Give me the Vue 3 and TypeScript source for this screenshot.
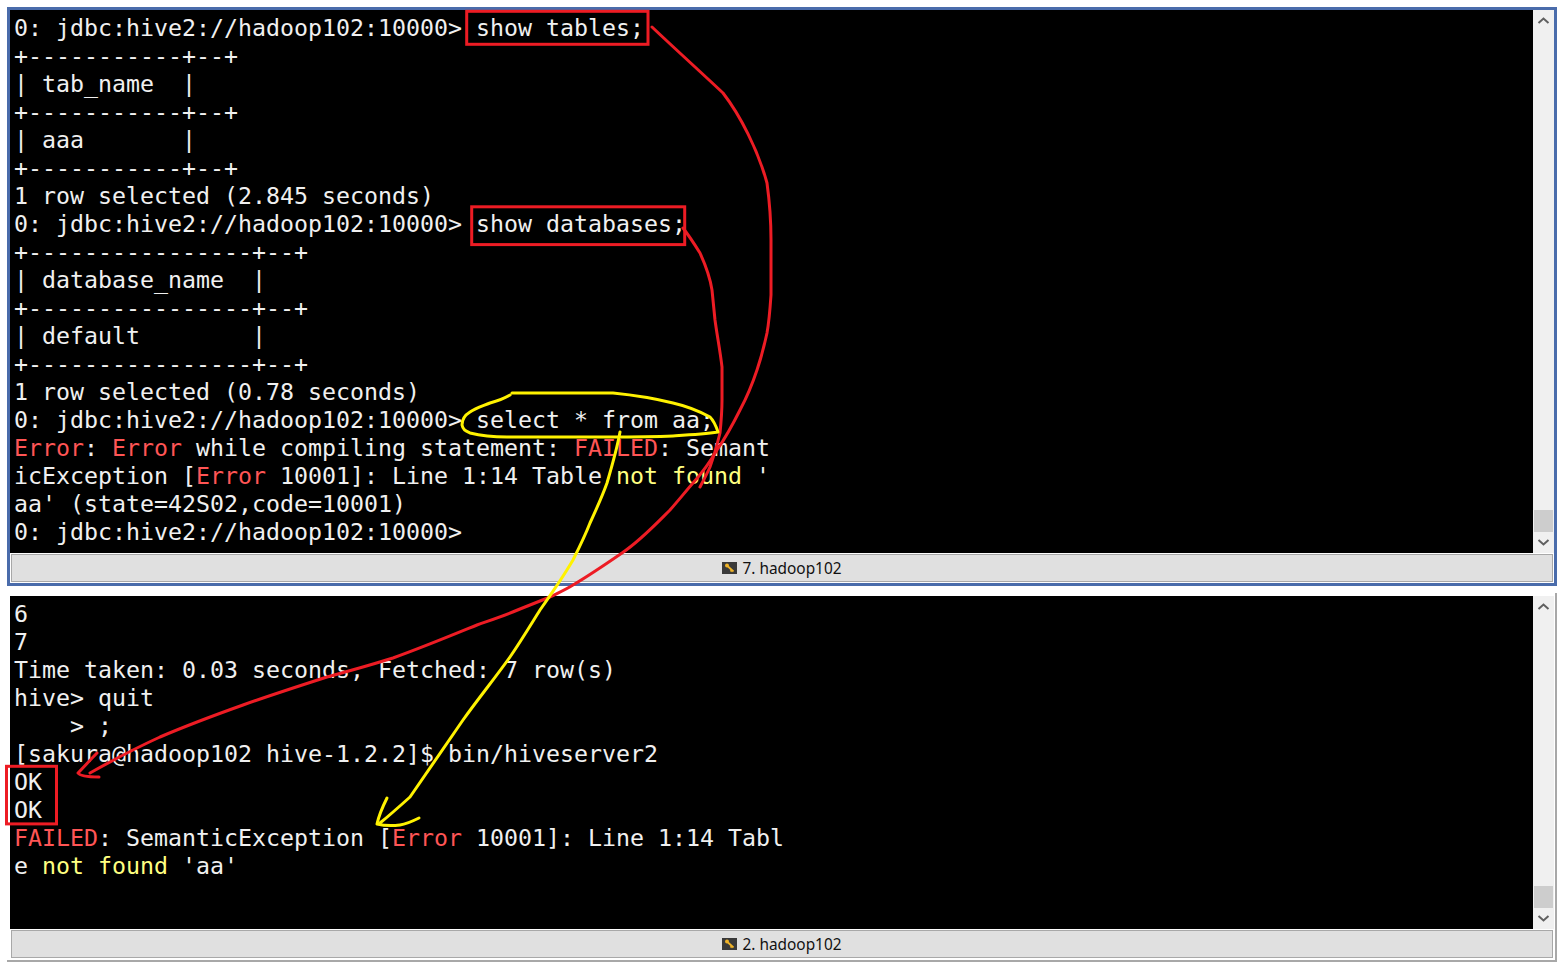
<script setup lang="ts">
type Seg = { t: string; c?: 'r' | 'y' };
type Line = Seg[];
const p = (t: string): Line => [{ t }];
const prompt = '0: jdbc:hive2://hadoop102:10000>';
const topLines: Line[] = [
  p(prompt + ' show tables;'),
  p('+-----------+--+'),
  p('| tab_name  |'),
  p('+-----------+--+'),
  p('| aaa       |'),
  p('+-----------+--+'),
  p('1 row selected (2.845 seconds)'),
  p(prompt + ' show databases;'),
  p('+----------------+--+'),
  p('| database_name  |'),
  p('+----------------+--+'),
  p('| default        |'),
  p('+----------------+--+'),
  p('1 row selected (0.78 seconds)'),
  p(prompt + ' select * from aa;'),
  [{ t: 'Error', c: 'r' }, { t: ': ' }, { t: 'Error', c: 'r' }, { t: ' while compiling statement: ' }, { t: 'FAILED', c: 'r' }, { t: ': Semant' }],
  [{ t: 'icException [' }, { t: 'Error', c: 'r' }, { t: ' 10001]: Line 1:14 Table ' }, { t: 'not found', c: 'y' }, { t: " '" }],
  p("aa' (state=42S02,code=10001)"),
  p(prompt),
];
const bottomLines: Line[] = [
  p('6'),
  p('7'),
  p('Time taken: 0.03 seconds, Fetched: 7 row(s)'),
  p('hive> quit'),
  p('    > ;'),
  p('[sakura@hadoop102 hive-1.2.2]$ bin/hiveserver2'),
  p('OK'),
  p('OK'),
  [{ t: 'FAILED', c: 'r' }, { t: ': SemanticException [' }, { t: 'Error', c: 'r' }, { t: ' 10001]: Line 1:14 Tabl' }],
  [{ t: 'e ' }, { t: 'not found', c: 'y' }, { t: " 'aa'" }],
];
const panes = [
  { id: 'top', lines: topLines, title: '7. hadoop102' },
  { id: 'bottom', lines: bottomLines, title: '2. hadoop102' },
];
</script>

<template>
  <div class="page">
    <section v-for="pane in panes" :key="pane.id" class="pane" :class="pane.id">
      <div class="view">
        <div class="term">
          <div v-for="(line, i) in pane.lines" :key="i" class="line"><span v-for="(s, j) in line" :key="j" :class="s.c">{{ s.t }}</span></div>
        </div>
        <div class="scroll">
          <svg class="arrow" width="21" height="21" viewBox="0 0 21 21"><path d="M5.5 13 L10.5 8.5 L15.5 13" fill="none" stroke="#606060" stroke-width="2" /></svg>
          <div class="spacer"></div>
          <div class="thumb"></div>
          <svg class="arrow" width="21" height="21" viewBox="0 0 21 21"><path d="M5.5 8 L10.5 12.5 L15.5 8" fill="none" stroke="#606060" stroke-width="2" /></svg>
        </div>
      </div>
      <div class="bar">
        <svg width="15" height="12" viewBox="0 0 15 12" class="key">
          <rect width="15" height="12" fill="#3a3a3a" />
          <circle cx="5" cy="3.5" r="2" fill="#f0b429" />
          <path d="M6 4.5 L11.5 9.5 M9.5 8.5 L8.5 9.5" stroke="#f0b429" stroke-width="1.8" fill="none" />
        </svg>
        <span>{{ pane.title }}</span>
      </div>
    </section>

    <svg class="marks" width="1564" height="969" viewBox="0 0 1564 969" fill="none" stroke-linecap="round" stroke-linejoin="round">
      <g stroke="#ed1c24" stroke-width="3">
        <rect x="466.7" y="11.3" width="181.3" height="33" stroke-linejoin="miter" />
        <rect x="471.7" y="206.8" width="213" height="37.8" stroke-linejoin="miter" />
        <rect x="6.5" y="766.3" width="50" height="57.6" stroke-linejoin="miter" />
        <path d="M652 27 C672 46 705 76 723 93 C740 115 758 150 767 183 C770 205 771 225 771 240 L771 295 C770 310 769 322 767 333 C764 347 761 358 757 370 C752 385 747 397 740 410 C733 424 726 437 717 450 C710 462 702 473 693 483 C686 491 678 501 670 510 C655 525 640 541 622 553 C606 564 590 575 573 585 C565 590 558 593 550 597 C540 601 530 605 520 609 C506 615 491 620 477 625 C450 636 421 648 393 658 C371 665 349 671 327 677 C299 686 271 695 243 705 C215 715 188 725 160 737 C136 748 113 760 90 773" />
        <path d="M97 753 C90 760 84 767 78 773 C80 776 90 777 99 777" />
        <path d="M683 228 C690 237 695 245 700 253 C705 264 710 277 712 290 C713 300 714 310 715 320 C717 335 720 350 722 367 L722 400 C722 412 721 423 720 433 C717 445 714 456 710 467 C707 474 703 481 700 487" />
      </g>
      <g stroke="#fff200" stroke-width="3">
        <path d="M510 395 C503 399 497 401 490 403 C483 406 476 408 470 412 C465 415 462 420 462 425 C463 430 466 431 470 433 C482 436 494 437 507 437 L607 437 C629 437 651 437 673 436 C688 435 704 434 718 432 C716 426 714 421 710 417 C699 411 686 406 673 403 C653 398 633 395 613 393 L512 393" />
        <path d="M620 432 C617 449 612 466 607 483 C602 497 596 510 590 523 C585 536 579 548 573 560 C563 577 552 593 540 610 C530 626 521 641 510 657 C495 678 478 699 463 720 C446 745 428 771 410 797 C400 806 390 815 380 823" />
        <path d="M387 798 C383 806 379 815 377 824 C385 826 392 826 400 825 C407 824 413 821 419 818" />
      </g>
    </svg>
  </div>
</template>

<style scoped>
.page {
  position: relative;
  width: 1564px;
  height: 969px;
  overflow: hidden;
  background: #fff;
  box-sizing: border-box;
  padding: 7px 7px 0;
  display: flex;
  flex-direction: column;
  gap: 7px;
}
.pane {
  box-sizing: border-box;
  display: flex;
  flex-direction: column;
  background: #fff;
}
.pane.top {
  height: 579px;
  border: 3px solid #4a6cab;
}
.pane.bottom {
  height: 369px;
  padding: 3px 1px 2px 3px;
  border-right: 2px solid #a8a8a8;
  border-bottom: 2px solid #a8a8a8;
}
.view {
  flex: 1;
  min-height: 0;
  display: flex;
  margin-bottom: 1px;
}
.term {
  flex: 1;
  min-width: 0;
  background: #000;
  box-sizing: border-box;
  padding: 4px 0 0 4px;
  overflow: hidden;
  font-family: "DejaVu Sans Mono", "Liberation Mono", monospace;
  font-size: 23.25px;
  line-height: 28px;
  color: #f0f0f0;
  white-space: pre;
}
.line {
  height: 28px;
}
.r {
  color: #ff5555;
}
.y {
  color: #ffff80;
}
.scroll {
  width: 21px;
  flex: none;
  background: #f0f0f0;
  display: flex;
  flex-direction: column;
}
.arrow {
  display: block;
  flex: none;
}
.spacer {
  flex: 1;
}
.thumb {
  flex: none;
  height: 22px;
  margin: 0 1px;
  background: #cdcdcd;
}
.bar {
  flex: none;
  box-sizing: border-box;
  height: 28px;
  margin: 0 1px 1px 1px;
  background: #e0e0e0;
  border: 1px solid #a8a8a8;
  display: flex;
  align-items: center;
  justify-content: center;
  gap: 5px;
  font-family: "Noto Sans", "Open Sans", sans-serif;
  font-size: 15.4px;
  color: #111;
}
.pane.bottom .bar {
  margin-bottom: 0;
}
.key {
  flex: none;
}
.marks {
  position: absolute;
  left: 0;
  top: 0;
  pointer-events: none;
}
</style>
